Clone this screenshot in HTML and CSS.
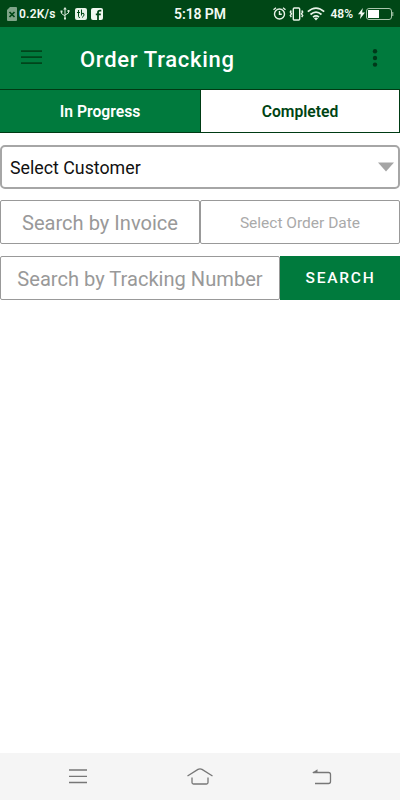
FILE: index.html
```html
<!DOCTYPE html>
<html lang="en">
<head>
    <meta charset="UTF-8">
    <meta name="viewport" content="width=device-width, initial-scale=1">
    <title>Order Tracking</title>
    <link rel="stylesheet" href="styles.css">
</head>
<body>
    <div class="screen">
        <div class="status-bar">
            <div class="status-left">
                <svg width="10" height="14" viewBox="0 0 10 14">
                    <path d="M3 0H9a1 1 0 0 1 1 1V13a1 1 0 0 1-1 1H1a1 1 0 0 1-1-1V3z" fill="#7fa588"/>
                    <path d="M2.5 5l5 5M7.5 5l-5 5" stroke="#004716" stroke-width="1.7"/>
                </svg>
                <span class="speed">0.2K/s</span>
                <svg class="usb" width="10" height="13" viewBox="0 0 10 13" fill="none" stroke="#dcebdc">
                    <path d="M5 1.5V11M1.5 4.5V6.5L5 9M8.5 4V6L5 8"/>
                    <path d="M5 0L6.8 2.5H3.2zM.5 3.5h2v2h-2zM7.5 3h2v2h-2zM4 10.5h2v2H4z" fill="#dcebdc" stroke="none"/>
                </svg>
                <svg class="app" width="12" height="12" viewBox="0 0 12 12">
                    <rect width="12" height="12" rx="2" fill="#e8f3e8"/>
                    <path d="M3.5 2v6.5q0 1 1.5 1M2 4.5h3M6.5 1.5v6M6.5 6q2-2 2.5 0t-2 3.5" fill="none" stroke="#004716" stroke-width="1"/>
                </svg>
                <svg width="12" height="12" viewBox="0 0 12 12">
                    <rect width="12" height="12" rx="2" fill="#f0f8f0"/>
                    <path d="M7 12V4.5Q7 2.7 9 2.7h1.3M4.8 6.3h5" fill="none" stroke="#004716" stroke-width="1.8"/>
                </svg>
            </div>
            <span class="time">5:18 PM</span>
            <div class="status-right">
                <svg width="13" height="13" viewBox="0 0 13 13" fill="none" stroke="#e8f3e8" stroke-width="1.4">
                    <circle cx="6.5" cy="7" r="5"/>
                    <path d="M6.5 4v3.3h2.3M.5 2.8L3 .8M12.5 2.8L10 .8"/>
                </svg>
                <svg class="vibrate" width="15" height="14" viewBox="0 0 15 14" fill="none" stroke="#e8f3e8" stroke-width="1.4">
                    <rect x="4.3" y="1" width="6.4" height="12" rx="1"/>
                    <path d="M2.3 3.5l-1 1.5 1.2 1.8-1.2 1.7 1 1.7M12.7 3.5l1 1.5-1.2 1.8 1.2 1.7-1 1.7"/>
                </svg>
                <svg width="18" height="14" viewBox="0 0 18 14" fill="none" stroke="#e8f3e8" stroke-width="1.7">
                    <path d="M.8 4.7Q9-2.6 17.2 4.7M3.5 7.5Q9 2.7 14.5 7.5M6 10.1Q9 7.6 12 10.1"/>
                    <path d="M9 13.5L6.9 11.3Q9 9.8 11.1 11.3z" fill="#e8f3e8" stroke="none"/>
                </svg>
                <span class="percent">48%</span>
                <svg class="bolt" width="7" height="11" viewBox="0 0 7 11">
                    <path d="M4.8 0L0 6.2h2.8L2 11 7 4.5H4.1z" fill="#f0f8f0"/>
                </svg>
                <svg width="28" height="12" viewBox="0 0 28 12">
                    <rect x=".5" y=".5" width="25" height="11" rx="2.5" fill="none" stroke="#a9c6ac"/>
                    <rect x="2" y="2" width="11" height="8" fill="#fff"/>
                    <path d="M26.8 4v4" stroke="#a9c6ac"/>
                </svg>
            </div>
        </div>

        <div class="header">
            <svg class="menu" width="21" height="15" viewBox="0 0 21 15">
                <path d="M0 1.2h21M0 7.2h21M0 13.2h21" stroke="#00451b" stroke-width="1.8"/>
            </svg>
            <h1>Order Tracking</h1>
            <svg class="more" width="6" height="18" viewBox="0 0 6 18" fill="#00391a">
                <circle cx="3" cy="2.2" r="2.2"/>
                <circle cx="3" cy="9" r="2.2"/>
                <circle cx="3" cy="15.6" r="2.2"/>
            </svg>
        </div>

        <div class="tabs">
            <div class="tab active">In Progress</div>
            <div class="tab">Completed</div>
        </div>

        <div class="select">
            <span>Select Customer</span>
            <svg width="18" height="12" viewBox="0 0 18 12">
                <path d="M1 1.5h16L9 10.5z" fill="#a5a5a5"/>
            </svg>
        </div>

        <div class="row">
            <div class="field">Search by Invoice</div>
            <div class="field date">Select Order Date</div>
        </div>

        <div class="row">
            <div class="field tracking">Search by Tracking Number</div>
            <div class="search-btn">SEARCH</div>
        </div>

        <div class="nav-bar">
            <svg width="18" height="15" viewBox="0 0 18 15">
                <path d="M0 1h18M0 7.3h18M0 13.5h18" stroke="#777" stroke-width="1.3"/>
            </svg>
            <svg width="26" height="17" viewBox="0 0 26 17" fill="none" stroke="#777" stroke-width="1.3">
                <path d="M.5 8L11 1.4Q13 .2 15 1.4L25.5 8M5 9.5V14.5Q5 16 6.5 16H19.5Q21 16 21 14.5V9.5"/>
            </svg>
            <svg width="20" height="16" viewBox="0 0 20 16">
                <path d="M1 3.5H16.5Q18.5 3.5 18.5 5.5V12.5Q18.5 14.5 16.5 14.5H3" fill="none" stroke="#777" stroke-width="1.3"/>
                <path d="M0 4L5.5 .3V4z" fill="#777"/>
            </svg>
        </div>
    </div>
</body>
</html>
```
FILE: styles.css
```css
* {
    box-sizing: border-box;
}

body {
    margin: 0;
    font-family: Roboto, "Liberation Sans", sans-serif;
    background: #fff;
}

svg {
    display: block;
    flex-shrink: 0;
}

.screen {
    display: flex;
    flex-direction: column;
    height: 100vh;
}

/* status bar */
.status-bar {
    display: grid;
    grid-template-columns: 1fr auto 1fr;
    align-items: center;
    height: 27px;
    padding: 0 6px 0 7px;
    background: #004716;
    color: #f3faf3;
    font-weight: 600;
}

.status-left,
.status-right {
    display: flex;
    align-items: center;
}

.status-right {
    justify-content: flex-end;
}

.speed {
    width: 37px;
    margin-left: 2px;
    font-size: 12px;
    letter-spacing: 0.2px;
    white-space: nowrap;
}

.usb {
    margin-left: 4px;
}

.app {
    margin: 0 4px 0 5px;
}

.time {
    padding-right: 1px;
    font-size: 14px;
    letter-spacing: -0.1px;
}

.vibrate {
    margin: 0 3px;
}

.percent {
    margin-left: 5px;
    font-size: 12px;
}

.bolt {
    margin: 0 1px 0 5px;
}

/* app header */
.header {
    display: flex;
    align-items: center;
    height: 62px;
    padding: 0 22px 0 21px;
    background: #007a3d;
}

.menu {
    margin-top: -1px;
}

.header h1 {
    margin: 3px 0 0 38px;
    color: #fff;
    font-size: 22px;
    font-weight: 500;
    letter-spacing: 0.7px;
}

.more {
    margin-left: auto;
}

/* tabs */
.tabs {
    display: flex;
    height: 44px;
    border: 1px solid #003b14;
    border-left: 0;
}

.tab {
    flex: 1;
    display: flex;
    align-items: center;
    justify-content: center;
    padding-top: 1px;
    color: #004414;
    font-size: 15.7px;
    font-weight: 600;
}

.tab.active {
    flex: 0 0 201px;
    background: #007a3d;
    color: #fff;
    border-right: 1px solid #003b14;
}

/* filters */
.select {
    display: flex;
    align-items: center;
    justify-content: space-between;
    height: 44px;
    margin-top: 12px;
    padding: 0 3px 0 8px;
    border: 2px solid #a6a6a6;
    border-radius: 5px;
    color: #111;
    font-size: 17.8px;
}

.row {
    display: flex;
    height: 44px;
    margin-top: 11px;
}

.row + .row {
    margin-top: 12px;
}

.field {
    flex: 1;
    display: flex;
    align-items: center;
    justify-content: center;
    padding-top: 1px;
    border: 1px solid #999;
    border-radius: 2px;
    color: #999;
    font-size: 20.1px;
    white-space: nowrap;
}

.date {
    color: #aaa;
    font-size: 15.5px;
}

.tracking {
    flex: 0 0 280px;
}

.search-btn {
    flex: 1;
    display: flex;
    align-items: center;
    justify-content: center;
    padding-left: 1px;
    background: #007a3d;
    color: #fff;
    font-size: 15.5px;
    font-weight: 500;
    letter-spacing: 1.8px;
}

/* system navigation */
.nav-bar {
    display: flex;
    align-items: center;
    justify-content: space-between;
    height: 47px;
    margin-top: auto;
    padding: 0 68px 0 69px;
    background: #f5f5f5;
}
```
